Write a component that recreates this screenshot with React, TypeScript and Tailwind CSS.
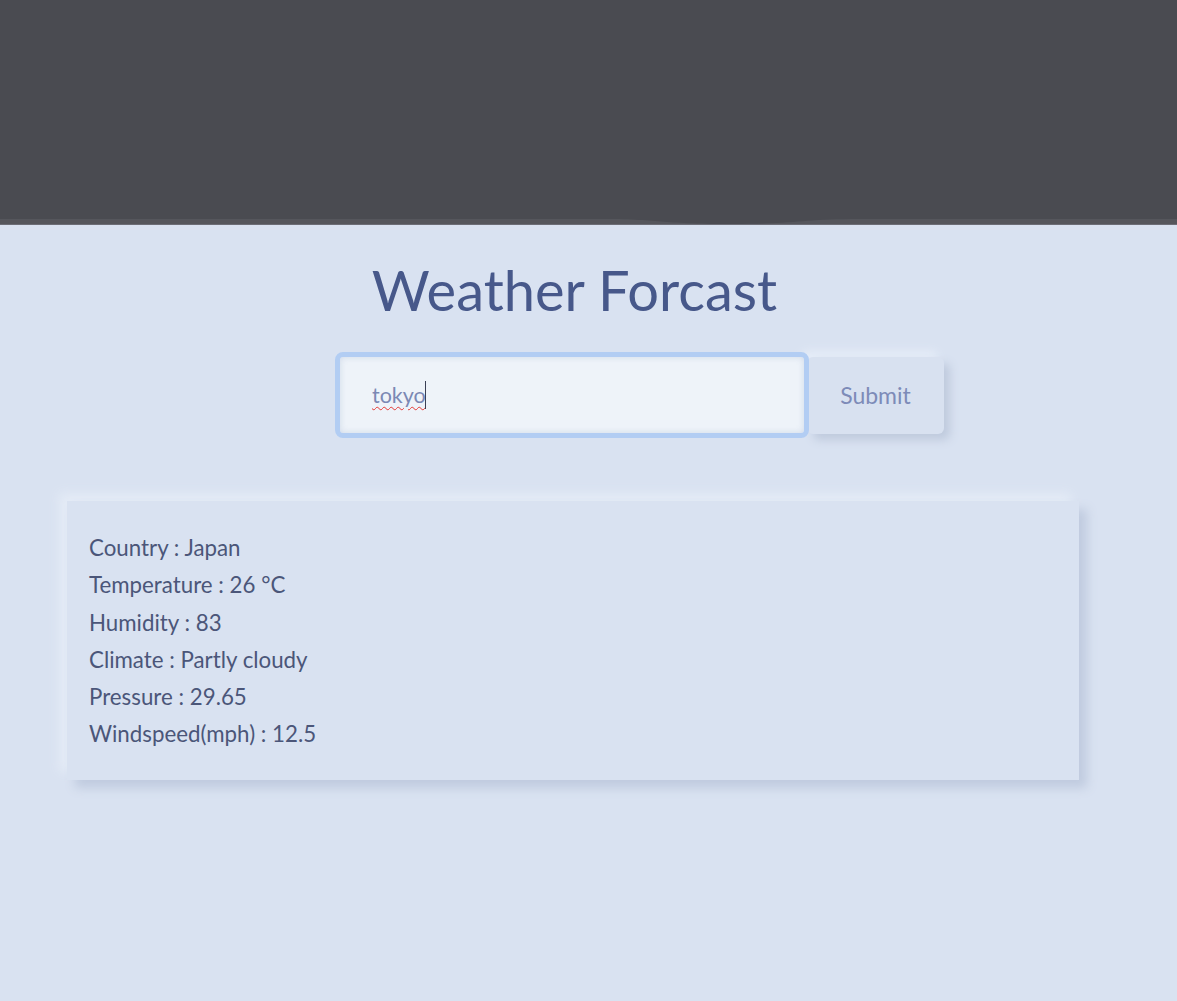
import * as React from "react"

const ROWS = [
  ["Country", "Japan"],
  ["Temperature", "26 °C"],
  ["Humidity", "83"],
  ["Climate", "Partly cloudy"],
  ["Pressure", "29.65"],
  ["Windspeed(mph)", "12.5"],
]

export default function App() {
  return (
    <div className="min-h-screen bg-[#d9e2f1] font-['Lato',sans-serif]">
      {/* dark top band */}
      <header className="relative bg-[#4a4b51]">
        <div className="h-[219px]" />
        <div className="h-[5px] bg-[#55565c]" />
        <div className="h-px bg-[#6c6d76]" />
        <svg className="absolute left-[600px] top-[216px]" width="260" height="9" viewBox="0 0 260 9">
          <path d="M0 3 C 60 3, 60 8, 130 8 C 200 8, 200 3, 260 3 L 260 0 L 0 0 Z" fill="#4a4b51" />
        </svg>
      </header>

      <main className="flex flex-col">
        <h1 className="mt-[29px] text-center text-[56px] leading-[72px] text-[#47588a] pr-[28px]">
          Weather Forcast
        </h1>

        <form className="mt-[26px] flex items-center pl-[335px]" onSubmit={(e) => e.preventDefault()}>
          <div className="relative">
            <input
              defaultValue="tokyo"
              spellCheck={false}
              className="w-[474px] h-[86px] rounded-lg border-[5px] border-[#b2cdf3] bg-[#eef3f9] pl-[32px] text-[21.5px] text-[#7b88b4] outline-none shadow-[inset_0_0_6px_rgba(150,170,200,0.35)]"
            />
            {/* spellcheck squiggle + caret */}
            <span className="pointer-events-none absolute left-[37px] top-[28px] text-[21.5px] leading-[30px] text-transparent underline decoration-wavy decoration-[#e53935] decoration-1 underline-offset-[3px]">
              tokyo
            </span>
            <span className="absolute left-[90px] top-[29px] h-[28px] w-px bg-[#3a3f55]" />
          </div>
          <button
            type="submit"
            className="-ml-[2px] w-[137px] h-[77px] rounded-md bg-[#d8e1f0] text-[23px] text-[#7d8bb8] shadow-[6px_6px_10px_#bfcadd,-6px_-6px_10px_#e6edf8]"
          >
            Submit
          </button>
        </form>

        <section className="mt-[63px] ml-[67px] w-[1012px] h-[279px] bg-[#d9e2f1] pl-[22px] pt-[28px] shadow-[8px_8px_10px_#c0cbdf,-8px_-8px_10px_#e4ebf6]">
          {ROWS.map(([k, v]) => (
            <p key={k} className="text-[22.3px] leading-[37.3px] text-[#4b5679]">
              {k} : {v}
            </p>
          ))}
        </section>
      </main>
    </div>
  )
}
